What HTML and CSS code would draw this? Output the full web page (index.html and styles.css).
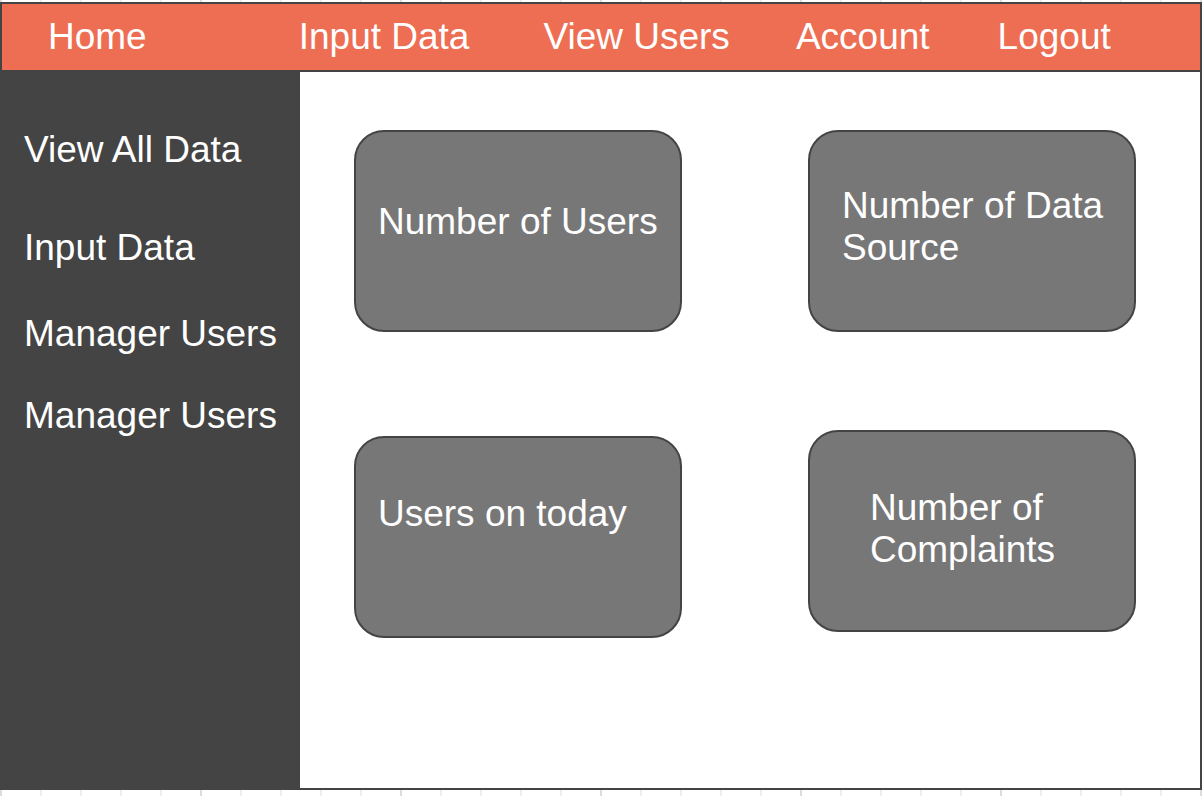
FILE: index.html
```html
<!DOCTYPE html>
<html lang="en">
<head>
<meta charset="utf-8">
<title>Dashboard</title>
<link rel="stylesheet" href="styles.css">
</head>
<body>
<div class="app">
  <nav class="topbar" aria-label="Main">
    <a class="home" href="#">Home</a>
    <a class="input" href="#">Input Data</a>
    <a class="users" href="#">View Users</a>
    <a class="account" href="#">Account</a>
    <a href="#">Logout</a>
  </nav>
  <div class="body">
    <nav class="sidebar" aria-label="Data">
      <a class="first" href="#">View All Data</a>
      <a class="second" href="#">Input Data</a>
      <a class="third" href="#">Manager Users</a>
      <a href="#">Manager Users</a>
    </nav>
    <main class="main">
      <div class="column left">
        <section class="card users-total">Number of Users</section>
        <section class="card users-today">Users on today</section>
      </div>
      <div class="column right">
        <section class="card sources">Number of Data Source</section>
        <section class="card complaints">Number of Complaints</section>
      </div>
    </main>
  </div>
</div>
</body>
</html>
```

FILE: styles.css
```css
* {
  box-sizing: border-box;
}

body {
  margin: 0;
  padding: 2px 0 6px;
  min-height: 100vh;
  display: flex;
  color: #fff;
  font: 37px/42px "Liberation Sans", Arial, sans-serif;
  background:
    repeating-linear-gradient(to right, #ddd 0 2px, transparent 2px 200px),
    repeating-linear-gradient(to right, #eee 0 2px, transparent 2px 40px),
    #fff;
}

a {
  color: inherit;
  text-decoration: none;
  white-space: nowrap;
}

.app {
  flex: 1;
  display: flex;
  flex-direction: column;
  border: 2px solid #444;
  background: #fff;
}

.topbar {
  display: flex;
  align-items: center;
  padding: 12px 46px;
  border-bottom: 2px solid #444;
  background: #ed6e52;
}

.home {
  margin-right: 152px;
}

.input {
  margin-right: 74px;
}

.users {
  margin-right: 66px;
}

.account {
  margin-right: 68px;
}

.body {
  flex: 1;
  display: flex;
}

.sidebar {
  flex: 0 0 298px;
  display: flex;
  flex-direction: column;
  padding: 57px 12px 57px 22px;
  background: #444;
}

.first {
  margin-bottom: 56px;
}

.second {
  margin-bottom: 44px;
}

.third {
  margin-bottom: 40px;
}

.main {
  flex: 1;
  display: flex;
  justify-content: space-between;
  padding: 58px 64px 0 54px;
}

.column {
  display: flex;
  flex-direction: column;
  flex: 0 0 328px;
}

.left {
  gap: 104px;
}

.right {
  gap: 98px;
}

.card {
  min-height: 202px;
  border: 2px solid #444;
  border-radius: 30px;
  background: #777;
}

.users-total {
  padding: 69px 12px 0 22px;
}

.users-today {
  padding: 55px 12px 0 22px;
}

.sources {
  padding: 53px 22px 0 32px;
}

.complaints {
  padding: 55px 32px 0 60px;
}
```
